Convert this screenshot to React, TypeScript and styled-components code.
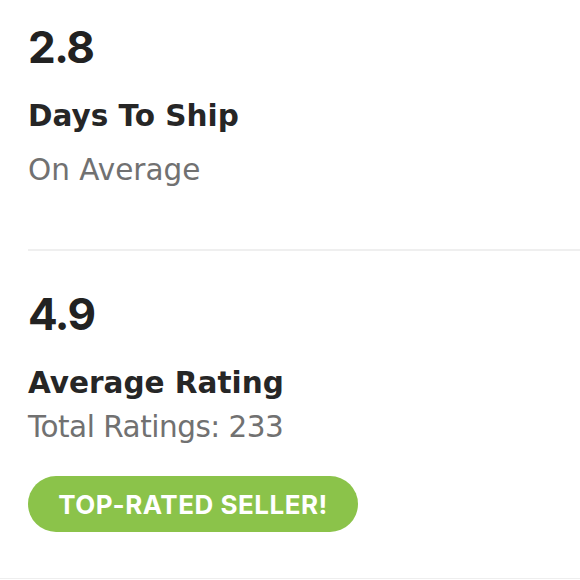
import styled, { createGlobalStyle } from 'styled-components';

const GlobalStyle = createGlobalStyle`
	body {
		margin: 0;
		background: #fff;
		font-family: 'DejaVu Sans', 'Liberation Sans', sans-serif;
	}
`;

type Stat = {
	value: string;
	title: string;
	caption: string;
	badge?: string;
};

const stats: Stat[] = [
	{ value: '2.8', title: 'Days To Ship', caption: 'On Average' },
	{ value: '4.9', title: 'Average Rating', caption: 'Total Ratings: 233', badge: 'TOP-RATED SELLER!' },
];

const App = () => {
	return (
		<>
			<GlobalStyle />
			<Panel>
				{stats.map((stat, i) => (
					<Section key={stat.title} $first={i === 0} $last={i === stats.length - 1}>
						<Value>{stat.value}</Value>
						<Title>{stat.title}</Title>
						<Caption $tight={!!stat.badge}>{stat.caption}</Caption>
						{stat.badge && <Badge>{stat.badge}</Badge>}
					</Section>
				))}
			</Panel>
		</>
	);
};

export default App;

const Panel = styled.div`
	width: 580px;
	display: flex;
	flex-direction: column;
	border-bottom: 1px solid #eeeeee;
`;

const Section = styled.div<{ $first: boolean; $last: boolean }>`
	margin-left: 28px;
	display: flex;
	flex-direction: column;
	align-items: flex-start;
	padding-top: ${(p) => (p.$first ? '25px' : '41px')};
	padding-bottom: ${(p) => (p.$last ? '46px' : '61px')};
	border-bottom: ${(p) => (p.$last ? 'none' : '2px solid #efefef')};
`;

const Value = styled.div`
	font-family: 'Inter', sans-serif;
	font-size: 44px;
	line-height: 44px;
	font-weight: 700;
	letter-spacing: -1.5px;
	color: #222;
`;

const Title = styled.div`
	margin-top: 29px;
	font-size: 29.5px;
	line-height: 36px;
	font-weight: 700;
	color: #262626;
`;

const Caption = styled.div<{ $tight: boolean }>`
	margin-top: ${(p) => (p.$tight ? '8px' : '18px')};
	font-size: 29.5px;
	line-height: 36px;
	letter-spacing: ${(p) => (p.$tight ? '-0.5px' : '0')};
	color: #717171;
`;

const Badge = styled.div`
	margin-top: 31px;
	height: 56px;
	width: 330px;
	box-sizing: border-box;
	display: flex;
	align-items: center;
	justify-content: center;
	border-radius: 28px;
	background: #8bc34a;
	color: #fff;
	font-family: 'Inter', sans-serif;
	font-size: 26px;
	font-weight: 700;
	letter-spacing: 0.5px;
`;
